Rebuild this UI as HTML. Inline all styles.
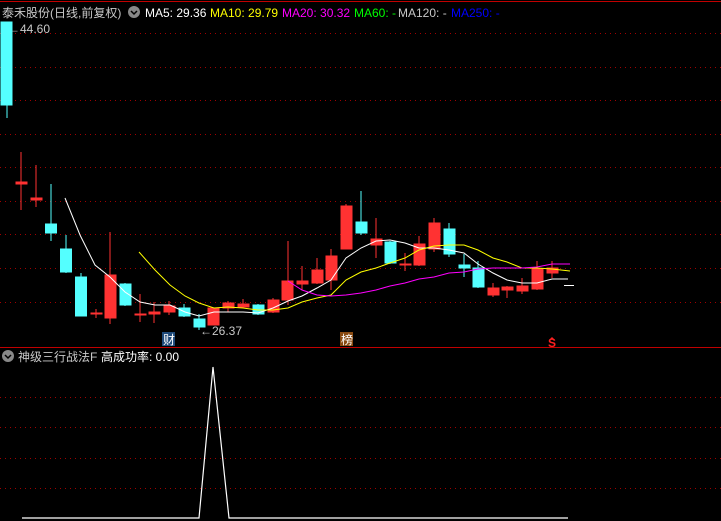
<!DOCTYPE html>
<html><head><meta charset="utf-8"><style>
html,body{margin:0;padding:0;background:#000;width:721px;height:521px;overflow:hidden}
svg{display:block}
text{font-family:"Liberation Sans","Noto Sans CJK SC",sans-serif;font-size:12px}
</style></head><body>
<svg width="721" height="521" viewBox="0 0 721 521" xmlns="http://www.w3.org/2000/svg">
<rect width="721" height="521" fill="#000"/>
<line x1="0" y1="1.5" x2="721" y2="1.5" stroke="#c00000" stroke-width="1"/>
<g stroke="#a00000" stroke-width="1" stroke-dasharray="1,4">
<line x1="0" y1="33.5" x2="721" y2="33.5"/><line x1="0" y1="67.5" x2="721" y2="67.5"/>
<line x1="0" y1="100.5" x2="721" y2="100.5"/><line x1="0" y1="134.5" x2="721" y2="134.5"/>
<line x1="0" y1="167.5" x2="721" y2="167.5"/><line x1="0" y1="201.5" x2="721" y2="201.5"/>
<line x1="0" y1="234.5" x2="721" y2="234.5"/><line x1="0" y1="268.5" x2="721" y2="268.5"/>
<line x1="0" y1="302.5" x2="721" y2="302.5"/>
<line x1="0" y1="397.5" x2="721" y2="397.5"/><line x1="0" y1="427.5" x2="721" y2="427.5"/>
<line x1="0" y1="458.5" x2="721" y2="458.5"/><line x1="0" y1="488.5" x2="721" y2="488.5"/>
</g>
<line x1="0" y1="347.5" x2="721" y2="347.5" stroke="#c00000"/>
<text x="2" y="17" fill="#c8c8c8">泰禾股份(日线,前复权)</text>
<circle cx="134" cy="12" r="6" fill="#888"/><path d="M131 11l3 3 3-3" stroke="#000" stroke-width="1.5" fill="none"/>
<text x="145" y="17" fill="#fff">MA5: 29.36</text>
<text x="210" y="17" fill="#ff0">MA10: 29.79</text>
<text x="282" y="17" fill="#f0f">MA20: 30.32</text>
<text x="354" y="17" fill="#0f0">MA60: -</text>
<text x="398" y="17" fill="#c8c8c8">MA120: -</text>
<text x="451" y="17" fill="#0000ff">MA250: -</text>
<text x="8" y="33" fill="#c8c8c8">←44.60</text>
<g id="c">
<!-- cyan candles -->
<g fill="#54ffff" stroke="#54ffff">
<line x1="7" y1="22" x2="7" y2="118"/><rect x="1" y="22" width="11" height="83"/>
<line x1="51" y1="184" x2="51" y2="241"/><rect x="45.5" y="224" width="11" height="9"/>
<line x1="66" y1="235" x2="66" y2="273"/><rect x="60.5" y="249" width="11" height="23"/>
<line x1="81" y1="273" x2="81" y2="316"/><rect x="75.5" y="277" width="11" height="39"/>
<line x1="125" y1="283" x2="125" y2="306"/><rect x="120" y="284" width="11" height="21"/>
<line x1="184" y1="304" x2="184" y2="317"/><rect x="179" y="308" width="11" height="8"/>
<line x1="199" y1="314" x2="199" y2="330"/><rect x="194" y="319" width="11" height="8"/>
<line x1="258" y1="304" x2="258" y2="315"/><rect x="253" y="305" width="11" height="9"/>
<line x1="361" y1="191" x2="361" y2="235"/><rect x="356" y="222" width="11" height="11"/>
<line x1="390" y1="241" x2="390" y2="264"/><rect x="385" y="242" width="11" height="21"/>
<line x1="449" y1="223" x2="449" y2="257"/><rect x="444" y="229" width="11" height="25"/>
<line x1="464" y1="254" x2="464" y2="277"/><rect x="459" y="265" width="11" height="3"/>
<line x1="478" y1="261" x2="478" y2="288"/><rect x="473" y="268" width="11" height="19"/>
</g>
<g fill="#ff3232" stroke="#ff3232">
<line x1="21" y1="152" x2="21" y2="210"/><rect x="16" y="182" width="11" height="2"/>
<line x1="36" y1="165" x2="36" y2="207"/><rect x="31" y="198" width="11" height="2"/>
<line x1="96" y1="309" x2="96" y2="318"/><rect x="91" y="313" width="11" height="1"/>
<line x1="110" y1="232" x2="110" y2="324"/><rect x="105" y="275" width="11" height="43"/>
<line x1="140" y1="294" x2="140" y2="322"/><rect x="135" y="314" width="11" height="1"/>
<line x1="154" y1="302" x2="154" y2="323"/><rect x="149" y="312" width="11" height="2"/>
<line x1="169" y1="301" x2="169" y2="315"/><rect x="164" y="306" width="11" height="6"/>
<line x1="213" y1="308" x2="213" y2="325"/><rect x="208" y="308" width="11" height="17"/>
<line x1="228" y1="301" x2="228" y2="312"/><rect x="223" y="303" width="11" height="5"/>
<line x1="243" y1="299" x2="243" y2="308"/><rect x="238" y="304" width="11" height="3"/>
<line x1="273" y1="298" x2="273" y2="313"/><rect x="268" y="300" width="11" height="12"/>
<line x1="288" y1="241" x2="288" y2="305"/><rect x="282" y="281" width="11" height="19"/>
<line x1="302" y1="266" x2="302" y2="290"/><rect x="297" y="281" width="11" height="3"/>
<line x1="317" y1="258" x2="317" y2="284"/><rect x="312" y="270" width="11" height="13"/>
<line x1="331" y1="249" x2="331" y2="290"/><rect x="326" y="256" width="11" height="24"/>
<line x1="346" y1="204" x2="346" y2="249"/><rect x="341" y="206" width="11" height="43"/>
<line x1="376" y1="218" x2="376" y2="258"/><rect x="371" y="239" width="11" height="6"/>
<line x1="405" y1="253" x2="405" y2="271"/><rect x="400" y="264" width="11" height="1"/>
<line x1="419" y1="236" x2="419" y2="266"/><rect x="414" y="244" width="11" height="21"/>
<line x1="434" y1="218" x2="434" y2="252"/><rect x="429" y="223" width="11" height="26"/>
<line x1="493" y1="283" x2="493" y2="297"/><rect x="488" y="288" width="11" height="7"/>
<line x1="507" y1="286" x2="507" y2="298"/><rect x="502" y="287" width="11" height="3"/>
<line x1="522" y1="278" x2="522" y2="294"/><rect x="517" y="286" width="11" height="5"/>
<line x1="537" y1="261" x2="537" y2="290"/><rect x="532" y="269" width="11" height="20"/>
<line x1="552" y1="261" x2="552" y2="278"/><rect x="547" y="268" width="11" height="5"/>
</g>
</g>
<polyline fill="none" stroke="#fff" stroke-width="1" points="65,198 80,235 95,265 110,277 125,292 140,302 155,305 170,305 185,312 199,316 214,312 228,312 243,312 258,313 273,308 288,301 302,296 317,288 331,280 346,258 361,248 376,241 390,240 405,243 419,248 434,248 449,250 464,253 478,264 493,273 507,280 522,283 537,283 552,279 568,279"/>
<line x1="564" y1="285.5" x2="574" y2="285.5" stroke="#fff"/>
<polyline fill="none" stroke="#ff0" stroke-width="1" points="139,252 155,270 170,285 185,296 199,303 214,308 228,307 243,308 258,310 273,310 288,308 302,302 317,298 331,295 346,280 361,272 376,268 390,263 405,258 419,250 434,246 449,245 464,245 478,250 493,258 507,262 522,268 537,268 552,269 570,271"/>
<polyline fill="none" stroke="#f0f" stroke-width="1" points="288,281 302,290 317,295 331,296 346,295 361,293 376,290 390,286 405,283 419,279 434,277 449,273 464,272 478,269 493,268 507,268 522,268 537,267 552,264 570,264"/>
<text x="200" y="335" fill="#c8c8c8">←26.37</text>
<rect x="162" y="332" width="13" height="14" fill="#1e4a7a"/>
<text x="163" y="344" fill="#fff">财</text>
<rect x="340" y="332" width="13" height="14" fill="#8a4a10"/>
<text x="341" y="344" fill="#fff">榜</text>
<path d="M550 339l2-2 2 2z" fill="#ff2020"/>
<text x="548" y="347" fill="#ff2020" font-weight="bold">S</text>
<circle cx="8" cy="356" r="6" fill="#888"/><path d="M5 355l3 3 3-3" stroke="#000" stroke-width="1.5" fill="none"/>
<text x="18" y="361" fill="#c8c8c8">神级三行战法F</text>
<text x="101" y="361" fill="#fff">高成功率: 0.00</text>
<polyline fill="none" stroke="#fff" stroke-width="1.2" points="22,518 199,518 213,367 229,518 568,518"/>
</svg>
</body></html>
